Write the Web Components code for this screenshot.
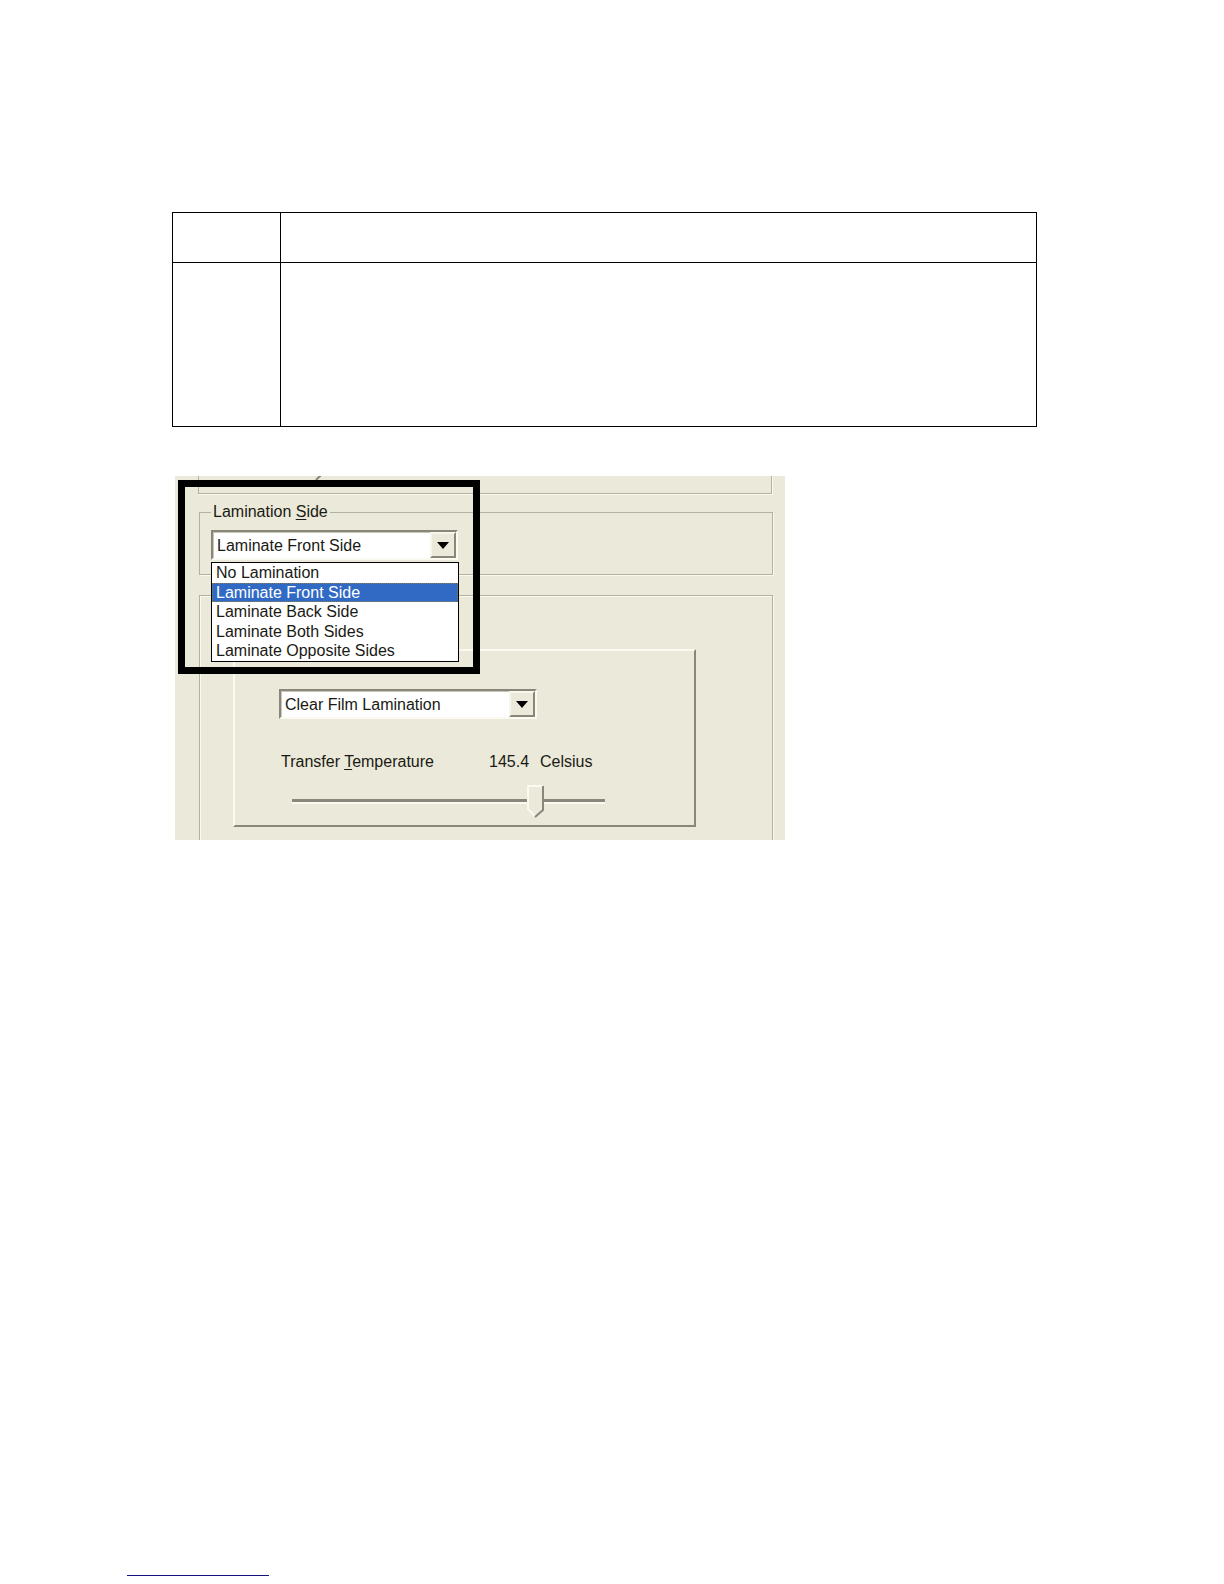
<!DOCTYPE html>
<html lang="en">
<head>
<meta charset="utf-8">
<title>Lamination Side</title>
<style>
  body { margin: 0; background: #fff; font-family: "Liberation Sans", Arial, sans-serif; font-size: 16px; line-height: 20px; color: #1a1a14; }
</style>
</head>
<body>
<manual-page>
  <step-table></step-table>
  <driver-dialog>
    <group-box class="cut"></group-box>
    <group-box label="Lamination" key="S" rest="ide">
      <drop-down name="Lamination Side" value="Laminate Front Side" options="No Lamination|Laminate Front Side|Laminate Back Side|Laminate Both Sides|Laminate Opposite Sides" open></drop-down>
    </group-box>
    <group-box class="last">
      <raised-panel>
        <drop-down name="Film type" value="Clear Film Lamination" options="Clear Film Lamination"></drop-down>
        <temperature-slider></temperature-slider>
      </raised-panel>
    </group-box>
  </driver-dialog>
  <page-link slot="footer"></page-link>
</manual-page>

<script>
const define = (name, html, setup) => {
  const template = document.createElement('template');
  template.innerHTML = html;
  customElements.define(name, class extends HTMLElement {
    constructor() {
      super();
      this.attachShadow({ mode: 'open' }).append(template.content.cloneNode(true));
    }
    connectedCallback() { if (setup) setup(this, this.shadowRoot); }
  });
};

define('manual-page', `
  <style>
    :host { display: flex; flex-direction: column; min-height: 100vh; box-sizing: border-box; padding: 212px 0 8px; }
    main { flex: 1; padding: 0 187px 0 172px; }
    footer { padding-left: 127px; }
  </style>
  <main><slot></slot></main>
  <footer><slot name="footer"></slot></footer>`);

define('step-table', `
  <style>
    :host { display: block; }
    table { width: 100%; border-collapse: collapse; table-layout: fixed; }
    th, td { border: 1px solid #000; padding: 0; }
    th { height: 49px; }
    td { height: 163px; }
    .step { width: 107px; }
  </style>
  <table>
    <thead><tr><th class="step"></th><th></th></tr></thead>
    <tbody><tr><td></td><td></td></tr></tbody>
  </table>`);

define('driver-dialog', `
  <style>
    :host { display: block; position: relative; box-sizing: border-box; max-width: 610px; height: 364px; margin: 49px 0 0 3px; padding: 0 12px 0 24px; background: #ebe9d9; overflow: hidden; }
    .frame { position: absolute; left: 3px; top: 4px; width: 288px; height: 180px; border: 7px solid #000; pointer-events: none; z-index: 3; }
    .tip { position: absolute; left: 136px; top: 0; }
  </style>
  <svg class="tip" width="10" height="5"><path d="M9 0L5 4M8 0H10" stroke="#87857a" stroke-width="2" fill="none"/></svg>
  <slot></slot>
  <div class="frame"></div>`);

define('group-box', `
  <style>
    :host { display: block; }
    fieldset { margin: 0; min-width: 0; box-sizing: border-box; border: 1px solid #b3b1a2; padding: 8px 0 0 11px; box-shadow: 1px 1px 0 #fbfaf0, inset 1px 1px 0 #fbfaf0; height: 73px; }
    legend { padding: 0 2px; line-height: 20px; }
    :host([label]) { margin-top: 8px; }
    :host([label]) fieldset { box-shadow: 1px 1px 0 #fbfaf0; }
    :host(.cut) fieldset { height: 18px; border-top: 0; padding: 0; margin: 0 1px 0 -1px; box-shadow: 1px 1px 0 #fbfaf0; }
    :host(.last) { margin-top: 20px; }
    :host(.last) fieldset { height: 260px; padding: 53px 0 0 33px; }
    u { text-underline-offset: 2px; }
  </style>
  <fieldset><slot></slot></fieldset>`, (host, root) => {
  if (!host.hasAttribute('label') || root.querySelector('legend')) return;
  const legend = document.createElement('legend');
  const key = document.createElement('u');
  key.textContent = host.getAttribute('key');
  legend.append(host.getAttribute('label') + ' ', key, host.getAttribute('rest'));
  root.querySelector('fieldset').prepend(legend);
});

define('drop-down', `
  <style>
    :host { display: block; position: relative; width: 247px; }
    .box { display: flex; box-sizing: border-box; height: 30px; background: #fff; border: 2px solid; border-color: #89877a #fbfaf0 #fbfaf0 #89877a; box-shadow: inset 1px 1px 0 #c9c7b9; }
    select { flex: 1; min-width: 0; appearance: none; border: 0; padding: 2px 0 0 4px; margin: 0; background: none; font: inherit; line-height: 20px; color: inherit; outline: 0; }
    .arrow { display: grid; place-items: center; box-sizing: border-box; width: 26px; background: #ebe9d9; border: 2px solid; border-color: #f7f6ea #89877a #89877a #f7f6ea; }
    ul { position: absolute; z-index: 2; left: 0; top: 32px; width: 246px; height: 98px; margin: 0; padding: 0; list-style: none; display: grid; grid-template-rows: repeat(5, minmax(0, 1fr)); background: #fff; border: 1px solid #000; }
    li { padding-left: 4px; line-height: 20px; }
    li[aria-selected=true] { background: #316ac5; color: #fff; outline: 1px dotted #8d7c4a; outline-offset: -1px; }
  </style>
  <div class="box">
    <select></select>
    <span class="arrow"><svg width="12" height="7"><path d="M0 0H12L6 7Z"/></svg></span>
  </div>`, (host, root) => {
  const select = root.querySelector('select');
  if (select.options.length) return;
  const names = host.getAttribute('options').split('|');
  const value = host.getAttribute('value');
  select.setAttribute('aria-label', host.getAttribute('name'));
  for (const name of names) select.add(new Option(name, name, name === value, name === value));
  if (!host.hasAttribute('open')) return;
  const list = document.createElement('ul');
  list.setAttribute('role', 'listbox');
  list.setAttribute('aria-label', host.getAttribute('name'));
  for (const name of names) {
    const item = document.createElement('li');
    item.setAttribute('role', 'option');
    item.setAttribute('aria-selected', name === value);
    item.textContent = name;
    list.append(item);
  }
  root.append(list);
});

define('raised-panel', `
  <style>
    :host { display: block; box-sizing: border-box; max-width: 463px; height: 178px; padding: 38px 0 0 44px; border: 2px solid; border-color: #fbfaf0 #89877a #89877a #fbfaf0; }
    ::slotted(drop-down) { width: 258px; }
  </style>
  <slot></slot>`);

define('temperature-slider', `
  <style>
    :host { display: block; margin-top: 33px; }
    .row { display: flex; padding-left: 2px; }
    label { width: 208px; }
    output { width: 51px; }
    input { appearance: none; display: block; width: 313px; height: 33px; margin: 13px 0 0 13px; background: none; outline: 0; }
    input::-webkit-slider-runnable-track { height: 5px; background: linear-gradient(#89877a 0 3px, #fbfaf0 3px 5px); }
    input::-webkit-slider-thumb { appearance: none; width: 17px; height: 33px; margin-top: -14px; border: 0; border-radius: 0; background: url("data:image/svg+xml,%3Csvg xmlns='http://www.w3.org/2000/svg' width='17' height='33'%3E%3Cpath d='M0 0H17V25L9 33L0 25Z' fill='%23ebe9d9'/%3E%3Cpath d='M8 31L1 24V1H15' fill='none' stroke='%23fbfaf0' stroke-width='2'/%3E%3Cpath d='M16 1V25L8 32' fill='none' stroke='%2389877a' stroke-width='2'/%3E%3C/svg%3E"); }
    u { text-underline-offset: 2px; }
  </style>
  <div class="row"><label for="t">Transfer <u>T</u>emperature</label><output for="t">145.4</output><span>Celsius</span></div>
  <input id="t" type="range" min="120" max="152" step="0.1" value="145.4">`);

define('page-link', `
  <style>
    :host { display: block; }
    a { display: block; width: 142px; height: 20px; border-bottom: 1px solid #14147c; }
  </style>
  <a href="#" aria-label="Home page"></a>`);
</script>
</body>
</html>
